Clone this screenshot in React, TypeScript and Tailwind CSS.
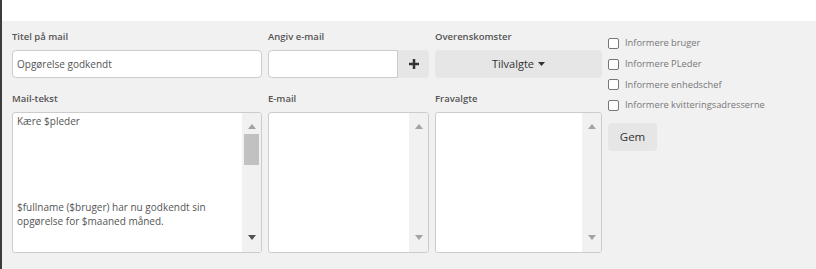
const font = { fontFamily: '"Open Sans", "Liberation Sans", sans-serif' };

function Label({ children }: { children: React.ReactNode }) {
  return <div className="h-[15px] text-[9.5px] leading-[15px] font-semibold text-[#555]">{children}</div>;
}

function Arrow({ dir, dark }: { dir: "up" | "down"; dark?: boolean }) {
  const color = dark ? "#505050" : "#a3a3a3";
  return (
    <svg width="8" height="5" viewBox="0 0 8 5">
      {dir === "up" ? <polygon points="0,5 8,5 4,0" fill={color} /> : <polygon points="0,0 8,0 4,5" fill={color} />}
    </svg>
  );
}

function TextBox({ children, thumb }: { children?: React.ReactNode; thumb?: boolean }) {
  return (
    <div className="mt-[6px] flex h-[141px] overflow-hidden rounded-[3px] border border-[#cccccc] bg-white">
      <div className="flex-1 px-[4px] pt-[1px] text-[10px] leading-[14.35px] text-[#555] whitespace-pre-line">{children}</div>
      <div className="flex w-[19px] flex-col items-center bg-[#f1f1f1]">
        <div className="flex h-[18px] items-end pb-[2px]">
          <Arrow dir="up" />
        </div>
        {thumb && <div className="mt-[3px] h-[31px] w-[15px] bg-[#c1c1c1]" />}
        <div className="flex-1" />
        <div className="flex h-[18px] items-start pt-[1px]">
          <Arrow dir="down" dark={thumb} />
        </div>
      </div>
    </div>
  );
}

function Check({ label }: { label: string }) {
  return (
    <label className="flex h-[20.7px] items-center gap-[6px] text-[9.3px] text-[#777]">
      <span className="h-[11px] w-[11px] rounded-[2px] border border-[#767676] bg-white" />
      {label}
    </label>
  );
}

export default function App() {
  return (
    <div style={font} className="flex h-[269px] w-[816px] flex-col border-l-2 border-[#3c3c3c]">
      <div className="h-[21px] bg-white" />
      <div className="flex flex-1 gap-[6px] bg-[#f1f1f1] pl-[10px] pt-[8px]">
        <div className="w-[250px]">
          <Label>Titel på mail</Label>
          <div className="mt-[6px] flex h-[28px] items-center rounded-[4px] border border-[#cccccc] bg-white px-[4px] text-[10px] text-[#555]">
            Opgørelse godkendt
          </div>
          <div className="mt-[13px]">
            <Label>Mail-tekst</Label>
          </div>
          <TextBox thumb>
            {"Kære $pleder\n\n\n\n\n\n$fullname ($bruger) har nu godkendt sin\nopgørelse for $maaned måned."}
          </TextBox>
        </div>
        <div className="w-[161px]">
          <Label>Angiv e-mail</Label>
          <div className="mt-[6px] flex h-[28px]">
            <div className="flex-1 rounded-l-[4px] border border-[#cccccc] bg-white" />
            <div className="flex w-[31px] items-center justify-center rounded-r-[4px] bg-[#e6e6e6]">
              <svg width="10" height="10" viewBox="0 0 10 10">
                <rect x="0" y="3.75" width="10" height="2.5" fill="#333" />
                <rect x="3.75" y="0" width="2.5" height="10" fill="#333" />
              </svg>
            </div>
          </div>
          <div className="mt-[13px]">
            <Label>E-mail</Label>
          </div>
          <TextBox />
        </div>
        <div className="w-[167px]">
          <Label>Overenskomster</Label>
          <div className="mt-[6px] flex h-[28px] items-center justify-center gap-[4px] rounded-[4px] bg-[#e6e6e6] text-[11px] text-[#333]">
            Tilvalgte
            <svg width="7" height="4" viewBox="0 0 7 4">
              <polygon points="0,0 7,0 3.5,4" fill="#333" />
            </svg>
          </div>
          <div className="mt-[13px]">
            <Label>Fravalgte</Label>
          </div>
          <TextBox />
        </div>
        <div className="flex flex-col pt-[4px]">
          <Check label="Informere bruger" />
          <Check label="Informere PLeder" />
          <Check label="Informere enhedschef" />
          <Check label="Informere kvitteringsadresserne" />
          <button className="mt-[7px] h-[28px] w-[49px] rounded-[4px] bg-[#e6e6e6] text-[11.5px] text-[#333]">Gem</button>
        </div>
      </div>
    </div>
  );
}
